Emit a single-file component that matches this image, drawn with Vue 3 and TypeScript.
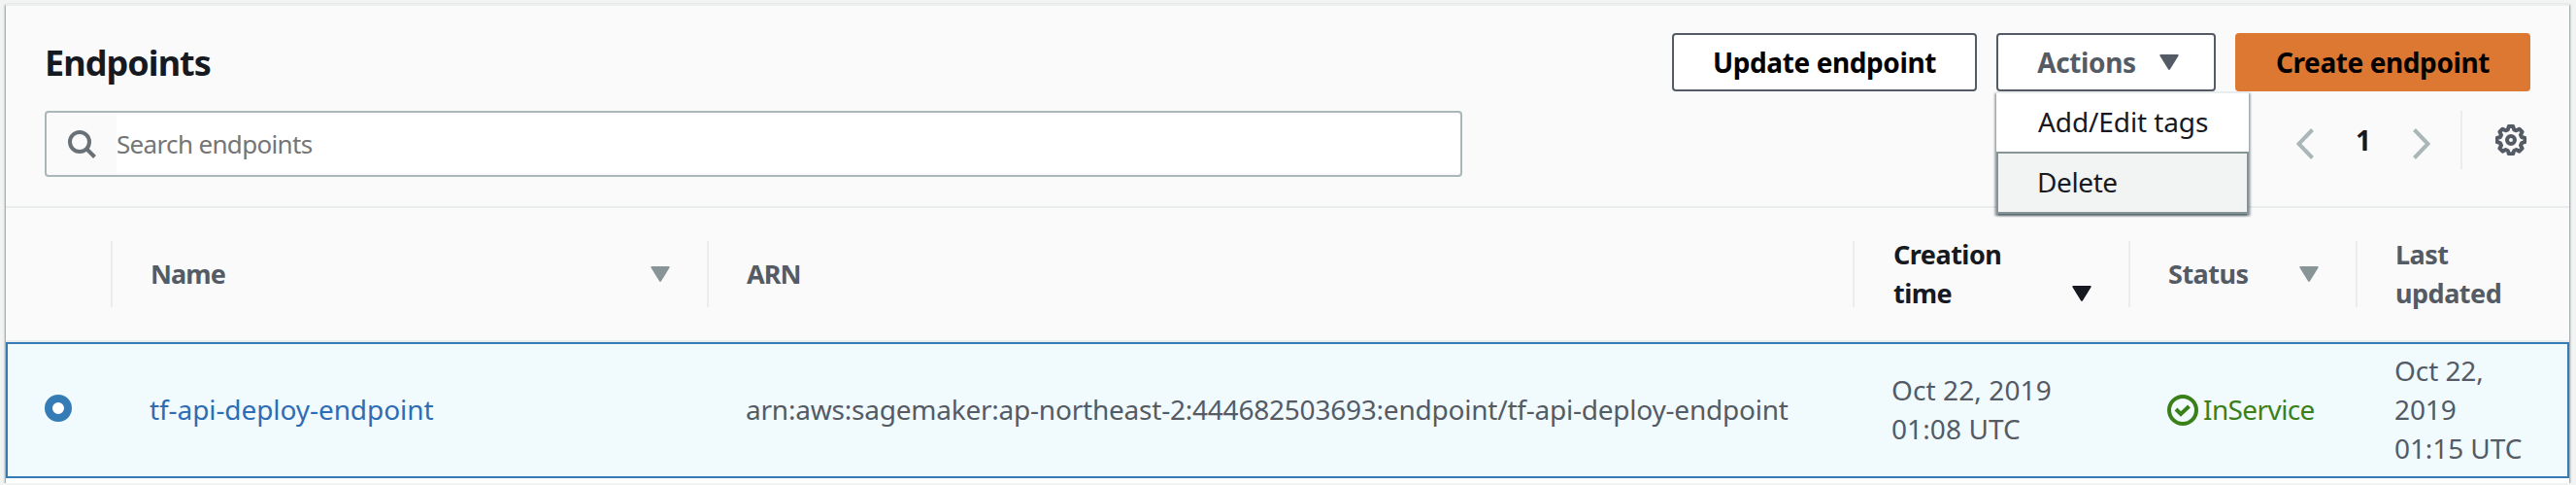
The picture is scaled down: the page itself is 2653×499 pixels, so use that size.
<script setup lang="ts">
interface Column {
  key: string
  label: string
  sort?: 'idle' | 'active'
}

const columns: Column[] = [
  { key: 'name', label: 'Name', sort: 'idle' },
  { key: 'arn', label: 'ARN' },
  { key: 'created', label: 'Creation time', sort: 'active' },
  { key: 'status', label: 'Status', sort: 'idle' },
  { key: 'updated', label: 'Last updated' },
]

const endpoint = {
  name: 'tf-api-deploy-endpoint',
  arn: 'arn:aws:sagemaker:ap-northeast-2:444682503693:endpoint/tf-api-deploy-endpoint',
  created: 'Oct 22, 2019 01:08 UTC',
  status: 'InService',
  updated: 'Oct 22, 2019 01:15 UTC',
}
</script>

<template>
  <section class="panel">
    <header class="toolbar">
      <div class="title-row">
        <h1>Endpoints</h1>
        <div class="actions">
          <button class="btn update">Update endpoint</button>
          <div class="dropdown">
            <button class="btn toggle">
              Actions
              <svg class="caret" viewBox="0 0 20 16"><path d="M1.500 0h17q1.800 0 1 1.500L11 15.300q-1 1.400-2 0L.500 1.500Q-.3 0 1.500 0z" /></svg>
            </button>
            <ul class="menu">
              <li>Add/Edit tags</li>
              <li class="current">Delete</li>
            </ul>
          </div>
          <button class="btn primary">Create endpoint</button>
        </div>
      </div>
      <div class="filter-row">
        <label class="search">
          <svg viewBox="0 0 32 32"><circle cx="13" cy="14" r="10" /><path d="M20 21l8.500 8.500" /></svg>
          <input type="text" placeholder="Search endpoints" />
        </label>
        <nav class="pager">
          <svg class="chevron" viewBox="0 0 18 32"><path d="M16.500 1.500L2.500 16l14 14.500" /></svg>
          <span class="page">1</span>
          <svg class="chevron next" viewBox="0 0 18 32"><path d="M1.500 1.500l14 14.500-14 14.500" /></svg>
          <span class="divider"></span>
          <svg class="gear" viewBox="0 0 32 32">
            <path d="M13.800 2h4.400l1 3.300 2.300 1 3.100-1.600 3 3-1.600 3.100 1 2.200 3.200 1v4.200l-3.200 1-1 2.300 1.600 3.100-3 3-3.100-1.600-2.300 1-1 3.200h-4.400l-1-3.200-2.300-1-3.100 1.600-3-3L6 21.500l-1-2.300-3.200-1V14L5 13l1-2.200-1.600-3.100 3-3 3.100 1.600 2.300-1z" />
            <circle cx="16" cy="16" r="4" />
          </svg>
        </nav>
      </div>
    </header>

    <div class="grid head">
      <div class="th"></div>
      <div v-for="c in columns" :key="c.key" class="th" :class="[c.key, { active: c.sort === 'active' }]">
        <span>{{ c.label }}</span>
        <svg v-if="c.sort" class="caret" viewBox="0 0 20 16"><path d="M1.500 0h17q1.800 0 1 1.500L11 15.300q-1 1.400-2 0L.500 1.500Q-.3 0 1.500 0z" /></svg>
      </div>
    </div>

    <div class="grid row">
      <div class="td select"><span class="radio"></span></div>
      <div class="td name"><a>{{ endpoint.name }}</a></div>
      <div class="td arn">{{ endpoint.arn }}</div>
      <div class="td created">{{ endpoint.created }}</div>
      <div class="td status">
        <svg viewBox="0 0 32 32"><circle cx="16" cy="16" r="14" /><path d="M9 15l5 5 8.500-8" /></svg>
        <span>{{ endpoint.status }}</span>
      </div>
      <div class="td updated">{{ endpoint.updated }}</div>
    </div>
  </section>
</template>

<style>
body {
  background: #f2f3f3;
}
</style>

<style scoped>
* {
  box-sizing: border-box;
}
.panel {
  width: 2640px;
  height: 493px;
  margin: 4px 0 0 6px;
  border-top: 2px solid #eaeded;
  background: #fff;
  box-shadow: 0 2px 2px 0 rgba(0, 28, 36, 0.3), 1px 1px 2px 0 rgba(0, 28, 36, 0.3), -1px 1px 2px 0 rgba(0, 28, 36, 0.3);
  font: 28px/40px 'Noto Sans', sans-serif;
  color: #545b64;
}
.toolbar {
  height: 208px;
  padding: 28px 40px 0;
  background: #fafafa;
  border-bottom: 2px solid #eaeded;
}
.title-row {
  display: flex;
  justify-content: space-between;
  align-items: center;
  height: 60px;
}
h1 {
  margin: 2px 0 0;
  font-size: 36px;
  line-height: 60px;
  letter-spacing: -0.95px;
  color: #16191f;
}
.actions {
  display: flex;
  gap: 20px;
}
.btn {
  display: flex;
  align-items: center;
  justify-content: center;
  height: 60px;
  padding: 0;
  border: 2px solid #545b64;
  border-radius: 4px;
  background: #fff;
  font: bold 28px/40px 'Noto Sans', sans-serif;
  letter-spacing: -0.4px;
  color: #000;
}
.update {
  width: 314px;
}
.toggle {
  width: 226px;
  padding-left: 4px;
  gap: 24px;
  color: #545b64;
}
.primary {
  width: 304px;
  border-color: #dd7832;
  background: #dd7832;
}
.caret {
  width: 20px;
  height: 16px;
  fill: currentColor;
}
.dropdown {
  position: relative;
}
.menu {
  position: absolute;
  z-index: 2;
  top: 60px;
  left: 0;
  width: 260px;
  margin: 0;
  padding: 0;
  list-style: none;
  background: #fff;
  border-top: 2px solid #eaeded;
  box-shadow: 0 2px 2px 0 rgba(0, 28, 36, 0.3), 2px 2px 2px 0 rgba(0, 28, 36, 0.3), -2px 2px 2px 0 rgba(0, 28, 36, 0.3);
  color: #16191f;
}
.menu li {
  height: 60px;
  padding-left: 43px;
  line-height: 58px;
  letter-spacing: -0.1px;
}
.menu .current {
  height: 64px;
  padding-left: 40px;
  border: 2px solid #879596;
  background: #f2f3f3;
  letter-spacing: -0.4px;
}
.filter-row {
  display: flex;
  justify-content: space-between;
  margin-top: 20px;
}
.search {
  display: flex;
  align-items: center;
  width: 1460px;
  height: 68px;
  border: 2px solid #aab7b8;
  border-radius: 4px;
}
.search svg {
  width: 32px;
  height: 32px;
  margin: 0 19px 0 21px;
  fill: none;
  stroke: #687078;
  stroke-width: 4;
}
.search input {
  flex: 1;
  height: 60px;
  padding: 0;
  border: 0;
  background: #fff;
  font: 26px/60px 'Noto Sans', sans-serif;
  letter-spacing: -0.66px;
}
.search input::placeholder {
  color: #757575;
}
.pager {
  display: flex;
  align-items: center;
  height: 60px;
}
.chevron {
  width: 18px;
  height: 32px;
  margin-top: 8px;
  fill: none;
  stroke: #aab7b8;
  stroke-width: 4;
}
.page {
  width: 102px;
  font-weight: bold;
  text-align: center;
  color: #16191f;
}
.divider {
  width: 2px;
  height: 60px;
  margin: 0 34px 0 31px;
  background: #eaeded;
}
.gear {
  width: 32px;
  height: 32px;
  margin-right: 4px;
  fill: none;
  stroke: #545b64;
  stroke-width: 4;
  stroke-linejoin: round;
}
.grid {
  display: grid;
  grid-template-columns: 110px 614px 1180px 284px 234px 218px;
}
.head {
  grid-template-rows: 68px;
  height: 138px;
  padding: 34px 0;
  background: #fafafa;
  border-bottom: 2px solid #eaeded;
}
.th {
  display: flex;
  align-items: center;
  justify-content: space-between;
  padding: 0 38px 0 39px;
  border-right: 2px solid #eaeded;
  font-size: 27px;
  font-weight: bold;
  letter-spacing: -0.5px;
}
.th:last-child {
  border-right: 0;
}
.th.name,
.th.arn {
  letter-spacing: -0.9px;
}
.th.created {
  padding-left: 40px;
}
.th .caret {
  color: #879596;
}
.th.created span {
  width: 120px;
}
.th.active,
.th.active .caret {
  color: #16191f;
}
.th.active .caret {
  margin-top: 40px;
}
.row {
  height: 140px;
  border: 2px solid #357bb5;
  background: #f1fafd;
  grid-template-columns: 108px 614px 1180px 284px 234px 216px;
}
.td {
  display: flex;
  align-items: center;
  padding: 0 0 2px 38px;
  letter-spacing: -0.08px;
}
.td.select {
  padding-bottom: 4px;
}
.td.arn {
  letter-spacing: -0.22px;
}
.td.created {
  padding-right: 60px;
  letter-spacing: 0.1px;
}
.td.updated {
  padding-right: 40px;
}
.td a {
  color: #2e6db4;
}
.radio {
  width: 28px;
  height: 28px;
  border: 8px solid #357bb5;
  border-radius: 50%;
  background: #fff;
}
.td.status {
  padding-bottom: 0;
  color: #3a8019;
  letter-spacing: -0.6px;
}
.td.status span {
  padding-bottom: 2px;
}
.td.status svg {
  width: 32px;
  height: 32px;
  margin-right: 5px;
  fill: none;
  stroke: currentColor;
  stroke-width: 4;
}
</style>
